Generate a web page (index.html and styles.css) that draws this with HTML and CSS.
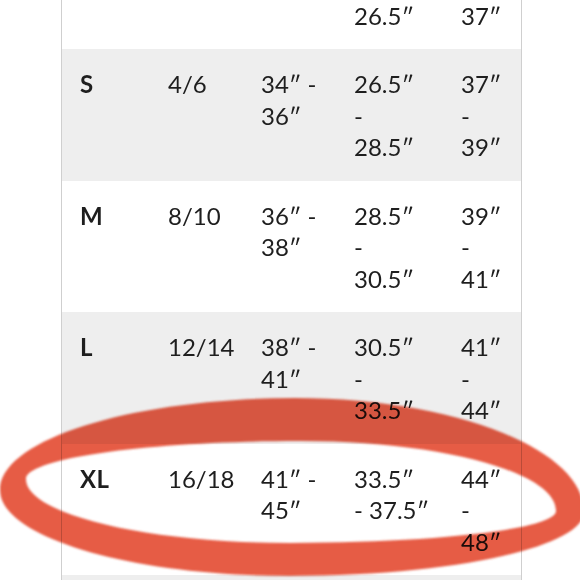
FILE: index.html
```html
<!DOCTYPE html>
<html lang="en">
<head>
<meta charset="utf-8">
<title>Size chart</title>
<link rel="stylesheet" href="styles.css">
</head>
<body>
<div class="page">
  <div class="chart">
    <div class="row">
      <div class="cell size">XS</div>
      <div class="cell">0/2</div>
      <div class="cell">32″ -<br>34″</div>
      <div class="cell">24.5″<br>-<br>26.5″</div>
      <div class="cell">35″<br>-<br>37″</div>
    </div>
    <div class="row alt">
      <div class="cell size">S</div>
      <div class="cell">4/6</div>
      <div class="cell">34″ -<br>36″</div>
      <div class="cell">26.5″<br>-<br>28.5″</div>
      <div class="cell">37″<br>-<br>39″</div>
    </div>
    <div class="row">
      <div class="cell size">M</div>
      <div class="cell">8/10</div>
      <div class="cell">36″ -<br>38″</div>
      <div class="cell">28.5″<br>-<br>30.5″</div>
      <div class="cell">39″<br>-<br>41″</div>
    </div>
    <div class="row alt">
      <div class="cell size">L</div>
      <div class="cell">12/14</div>
      <div class="cell">38″ -<br>41″</div>
      <div class="cell">30.5″<br>-<br>33.5″</div>
      <div class="cell">41″<br>-<br>44″</div>
    </div>
    <div class="row">
      <div class="cell size">XL</div>
      <div class="cell">16/18</div>
      <div class="cell">41″ -<br>45″</div>
      <div class="cell">33.5″<br>- 37.5″</div>
      <div class="cell">44″<br>-<br>48″</div>
    </div>
    <div class="row alt">
      <div class="cell size">XXL</div>
      <div class="cell">20/22</div>
      <div class="cell">45″ -<br>49″</div>
      <div class="cell">37.5″<br>-<br>41.5″</div>
      <div class="cell">48″<br>-<br>52″</div>
    </div>
  </div>
  <svg class="circle" width="580" height="580" viewBox="0 0 580 580" aria-hidden="true">
    <defs>
      <filter id="soft" x="-5%" y="-20%" width="110%" height="140%">
        <feGaussianBlur stdDeviation="1.3"/>
      </filter>
    </defs>
    <path fill="#e5533b" fill-rule="evenodd" filter="url(#soft)"
      d="M0 490 C0 439 133 398 295 398 C454 398 584 449 584 512 C584 547 452 576 290 576 C130 576 0 537 0 490 Z
         M26 479 C26 458 149 441 300 441 C441 441 556 472 556 511 C556 529 436 543 290 543 C145 543 26 514 26 479 Z"/>
  </svg>
</div>
</body>
</html>
```

FILE: styles.css
```css
html, body {
  margin: 0;
  padding: 0;
  background: #ffffff;
}

.page {
  position: relative;
  width: 580px;
  height: 580px;
  overflow: hidden;
  background: #ffffff;
  isolation: isolate;
}

.chart {
  margin-top: -82.3px;
  margin-left: 61px;
  width: 459px;
  border-left: 1px solid #cfcfcf;
  border-right: 1px solid #cfcfcf;
  font-family: Lato, "Noto Sans", "DejaVu Sans", sans-serif;
  font-size: 24px;
  line-height: 31.6px;
  color: #1e1e1e;
}

.row {
  display: grid;
  grid-template-columns: 88px 93px 93px 107px 78px;
  padding: 19px 0 17.7px;
  background: #ffffff;
}

.row.alt {
  background: #eeeeee;
}

.cell {
  padding-left: 18px;
  white-space: nowrap;
  height: 94.8px;
}

.size {
  font-weight: 700;
  letter-spacing: 0.5px;
}

.circle {
  position: absolute;
  top: 0;
  left: 0;
  pointer-events: none;
  mix-blend-mode: multiply;
  opacity: 0.95;
}
```
